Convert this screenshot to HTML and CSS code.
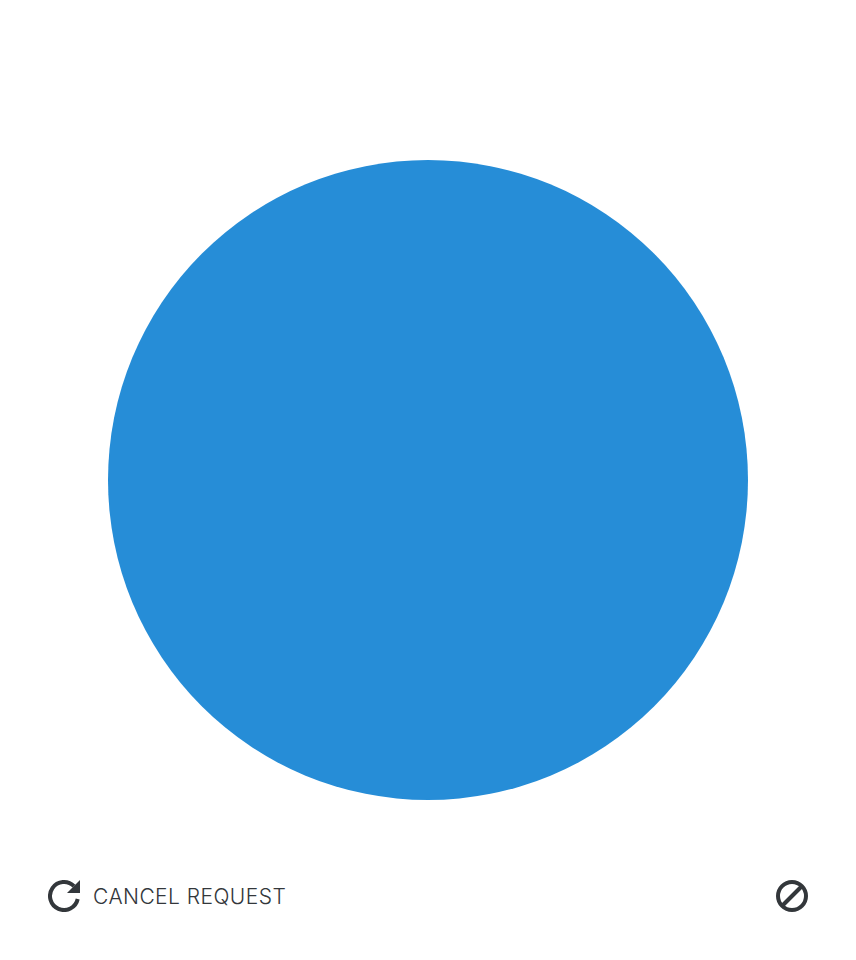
FILE: index.html
```html
<!DOCTYPE html>
<html lang="en">

<head>
	<title>Request</title>
	<meta charset="utf-8">
	<link rel="stylesheet" href="styles.css">
</head>

<body>
	<div class="page">
		<div class="status-circle"></div>
		<div class="toolbar">
			<button class="action" type="button">
				<svg class="icon" viewBox="0 0 32 32">
					<path class="icon-stroke" d="M26 6.2A14 14 0 1 0 29.7 19" />
					<path class="icon-fill" d="M32 0V13H19Z" />
				</svg>
				<span class="action-label">CANCEL REQUEST</span>
			</button>
			<button class="action" type="button">
				<svg class="icon" viewBox="0 0 32 32">
					<circle class="icon-stroke" cx="16" cy="16" r="14" />
					<path class="icon-stroke" d="M6.5 25.5L25.5 6.5" />
				</svg>
			</button>
		</div>
	</div>
</body>

</html>
```

FILE: styles.css
```css
body {
	margin: 0;
	background-color: #fff;
	color: #33373b;
	font-family: "Inter", "Liberation Sans", sans-serif;
}

.page {
	height: 960px;
	box-sizing: border-box;
	padding: 160px 48px 32px;
	display: flex;
	flex-direction: column;
	align-items: center;
	overflow: hidden;
}

.status-circle {
	width: 640px;
	height: 640px;
	flex: none;
	border-radius: 50%;
	background-color: #268dd7;
}

.toolbar {
	width: 100%;
	height: 64px;
	margin-top: 64px;
	display: flex;
	align-items: center;
	justify-content: space-between;
}

.action {
	display: flex;
	align-items: center;
	gap: 13px;
	margin: 0;
	padding: 0;
	border: 0;
	background: transparent;
	color: inherit;
	font: inherit;
}

.icon {
	width: 32px;
	height: 32px;
	display: block;
}

.icon-stroke {
	fill: none;
	stroke: currentColor;
	stroke-width: 4;
}

.icon-fill {
	fill: currentColor;
}

.action-label {
	padding-top: 2px;
	font-size: 21px;
	font-weight: 300;
	line-height: 32px;
	letter-spacing: 0.45px;
}
```
